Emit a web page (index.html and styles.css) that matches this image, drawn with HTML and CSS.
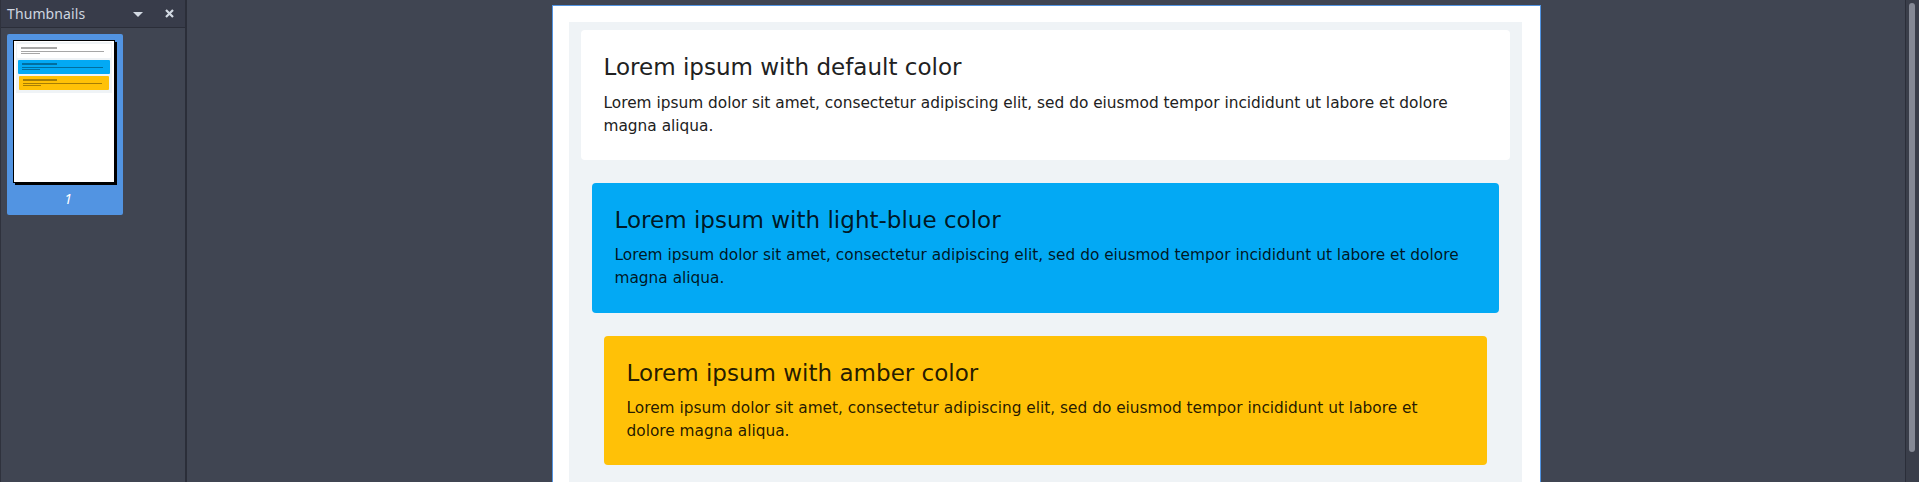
FILE: index.html
```html
<!DOCTYPE html>
<html>
<head>
<meta charset="utf-8">
<link rel="stylesheet" href="styles.css">
</head>
<body>
<div class="app">
  <aside class="sidebar">
    <div class="side-head">
      <span class="side-title">Thumbnails</span>
      <span class="side-tools">
        <svg class="ico-drop" width="10" height="5" viewBox="0 0 10 5"><path d="M0 0h10L5 5z" fill="#d3dae3"/></svg>
        <svg class="ico-close" width="9" height="9" viewBox="0 0 9 9"><path d="M1 1l7 7M8 1L1 8" stroke="#d3dae3" stroke-width="2.2" fill="none"/></svg>
      </span>
    </div>
    <div class="side-body">
      <div class="thumb">
        <div class="mini-page">
          <div class="mini-wrap">
            <div class="mini-card mc-white"><i class="l1"></i><i class="l2"></i><i class="l3"></i></div>
            <div class="mini-card mc-blue"><i class="l1"></i><i class="l2"></i><i class="l3"></i></div>
            <div class="mini-card mc-amber"><i class="l1"></i><i class="l2"></i><i class="l3"></i></div>
          </div>
        </div>
        <div class="thumb-num">1</div>
      </div>
    </div>
  </aside>
  <div class="splitter"></div>
  <main class="viewer">
    <div class="page">
      <div class="container">
        <div class="card card-default">
          <h2>Lorem ipsum with default color</h2>
          <p>Lorem ipsum dolor sit amet, consectetur adipiscing elit, sed do eiusmod tempor incididunt ut labore et dolore magna aliqua.</p>
        </div>
        <div class="card card-blue">
          <h2>Lorem ipsum with light-blue color</h2>
          <p>Lorem ipsum dolor sit amet, consectetur adipiscing elit, sed do eiusmod tempor incididunt ut labore et dolore magna aliqua.</p>
        </div>
        <div class="card card-amber">
          <h2>Lorem ipsum with amber color</h2>
          <p>Lorem ipsum dolor sit amet, consectetur adipiscing elit, sed do eiusmod tempor incididunt ut labore et dolore magna aliqua.</p>
        </div>
      </div>
    </div>
  </main>
  <div class="vscroll"><div class="vthumb"></div></div>
</div>
</body>
</html>
```
FILE: styles.css
```css
* { box-sizing: border-box; }
html, body { margin: 0; padding: 0; height: 100%; overflow: hidden; }
body { background: #404552; font-family: "DejaVu Sans", sans-serif; }
.app { display: flex; height: 482px; overflow: hidden; }

.sidebar { width: 185px; flex: none; display: flex; flex-direction: column; background: #404552; border-left: 1px solid #2f323d; }
.side-head { height: 28px; flex: none; background: #383c4a; border-bottom: 1px solid #2b2e39; display: flex; align-items: center; justify-content: space-between; padding: 0 11px 0 6px; }
.side-title { font-family: "Noto Sans", sans-serif; font-size: 14px; color: #cfd6e0; letter-spacing: 0.1px; }
.side-tools { display: flex; align-items: center; gap: 22px; }
.ico-drop { margin-top: 1px; }
.side-body { flex: 1; padding: 6px 0 0 6px; }
.thumb { width: 116px; height: 181px; background: #5294e2; border-radius: 2px; padding: 6px 0 0 6px; }
.mini-page { width: 102px; height: 143px; background: #fff; border: 1px solid #000; box-shadow: 2px 2px 0 #000; padding: 1px 2px; }
.mini-wrap { background: #eff3f6; padding: 2px 1px 3px; display: flex; flex-direction: column; gap: 2px; }
.mini-card { height: 14px; border-radius: 1px; padding: 3px 4px 2px; display: flex; flex-direction: column; gap: 1px; }
.mini-card i { display: block; height: 1px; background: rgba(0,0,0,0.35); }
.mini-card .l1 { width: 42%; height: 2px; margin-bottom: 1px; }
.mini-card .l2 { width: 96%; }
.mini-card .l3 { width: 22%; }
.mc-white { background: #fff; }
.mc-blue { background: #03a9f4; margin: 0 1px; }
.mc-amber { background: #ffc107; margin: 0 2px; }
.thumb-num { text-align: center; font-family: "Noto Sans", sans-serif; font-style: italic; font-size: 14px; color: #fff; margin-top: 6px; }

.splitter { width: 2px; flex: none; background: #2b2e39; }
.viewer { flex: 1; display: flex; justify-content: center; align-items: stretch; padding-top: 5px; overflow: hidden; }
.vscroll { width: 14px; flex: none; background: #3a3e4a; border-left: 1px solid #2b2e39; padding: 3px 0 0 3px; }
.vthumb { width: 6px; height: 449px; border-radius: 3px; background: #858995; }

.page { width: 989px; flex: none; background: #fff; border: 1px solid #5294e2; border-bottom: 0; padding: 16px 18px 0 16px; overflow: hidden; }
.container { background: #eff3f6; height: 100%; padding: 8px 12px; display: flex; flex-direction: column; gap: 23px; }
.card { border-radius: 4px; padding: 24px 23px 22px; }
.card h2 { margin: 0 0 10px; font-size: 23.04px; font-weight: normal; line-height: 1.2; }
.card p { margin: 0; font-size: 15.36px; line-height: 23.04px; }
.card-default { background: #fff; color: #212121; }
.card-blue { background: #03a9f4; color: rgba(0,0,0,0.87); margin: 0 11px; }
.card-amber { background: #ffc107; color: rgba(0,0,0,0.87); margin: 0 23px; }
```
